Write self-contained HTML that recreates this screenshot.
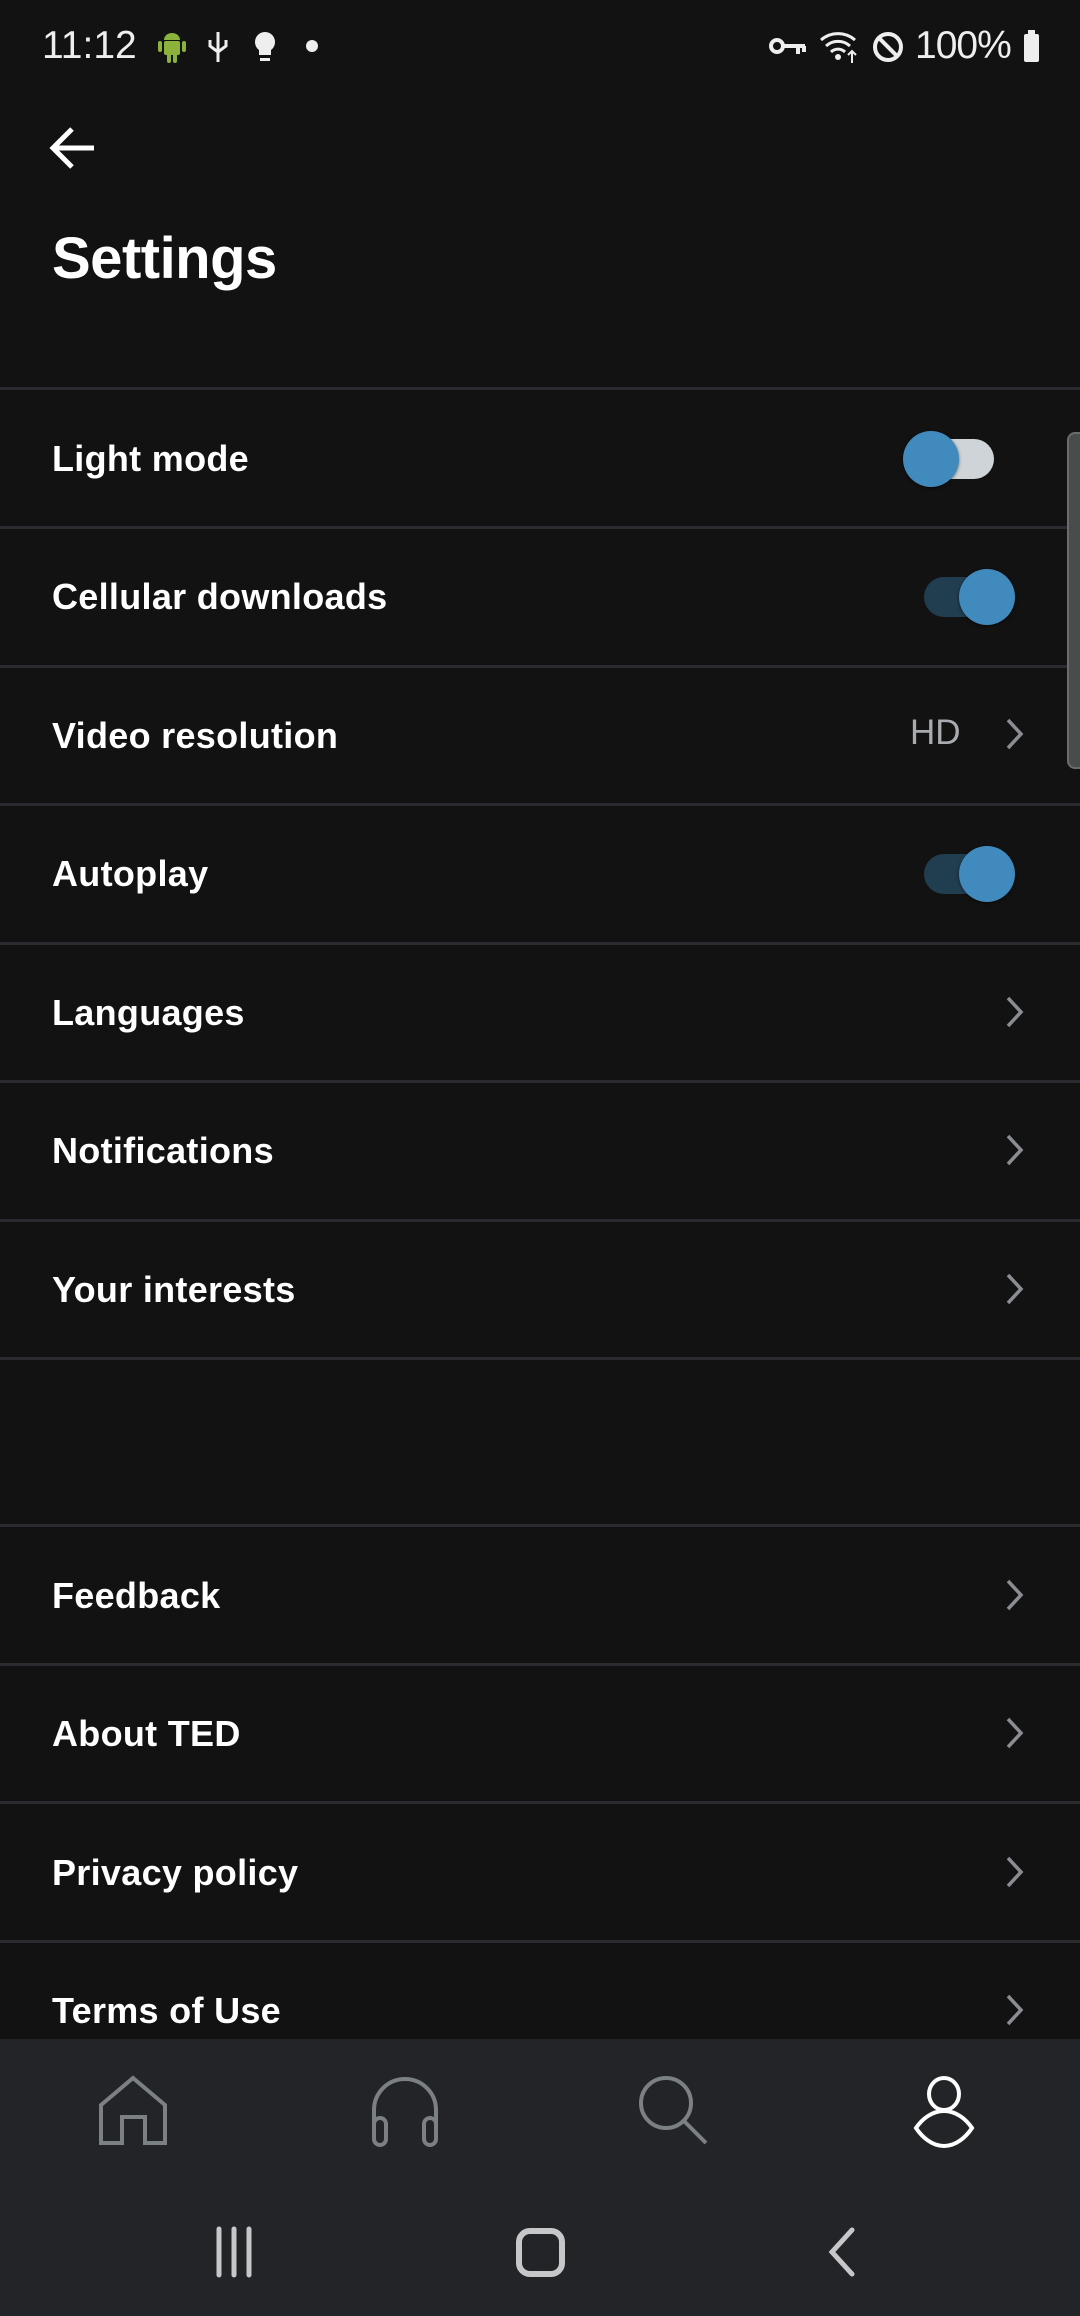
<!DOCTYPE html>
<html><head><meta charset="utf-8"><style>
*{margin:0;padding:0;box-sizing:border-box}
body{width:1080px;height:2316px;background:#121212;position:relative;overflow:hidden;font-family:"Liberation Sans",sans-serif;color:#fff}
.abs{position:absolute}
.sep{position:absolute;left:0;width:1080px;height:3px;background:#2a2b30}
.lbl{position:absolute;left:52px;font-size:36px;font-weight:bold;letter-spacing:0.3px;line-height:40px}
.chev{position:absolute;left:1003px}
</style></head><body>
<div class="abs" style="left:42px;top:24px;font-size:39px;color:#eee;line-height:44px">11:12</div>
<svg class="abs" style="left:156px;top:30px" width="32" height="34" viewBox="0 0 32 34"><g fill="#8bb23a"><path d="M8 10a8 7 0 0 1 16 0z"/><rect x="8" y="11" width="16" height="14" rx="2"/><rect x="2" y="11" width="4" height="11" rx="2"/><rect x="26" y="11" width="4" height="11" rx="2"/><rect x="11" y="23" width="4" height="10" rx="2"/><rect x="17" y="23" width="4" height="10" rx="2"/></g></svg>
<svg class="abs" style="left:205px;top:30px" width="26" height="34" viewBox="0 0 26 34"><g stroke="#eee" stroke-width="3" fill="none"><path d="M13 2v30M5 10v6l8 6 8-6v-6"/></g></svg>
<svg class="abs" style="left:252px;top:30px" width="26" height="34" viewBox="0 0 26 34"><path d="M13 2a10 10 0 0 1 6 18v5h-12v-5a10 10 0 0 1 6-18z M8 28h10v3h-10z" fill="#eee"/></svg>
<div class="abs" style="left:306px;top:40px;width:12px;height:12px;border-radius:6px;background:#eee"></div>
<svg class="abs" style="left:768px;top:34px" width="40" height="26" viewBox="0 0 40 26"><circle cx="9" cy="12" r="6" stroke="#eee" stroke-width="4" fill="none"/><path d="M15 12h22M30 12v8M36 12v6" stroke="#eee" stroke-width="4"/></svg>
<svg class="abs" style="left:818px;top:30px" width="44" height="34" viewBox="0 0 44 34"><g stroke="#eee" stroke-width="3" fill="none"><path d="M3 10a26 26 0 0 1 34 0M8 16a18 18 0 0 1 24 0M13 22a10 10 0 0 1 14 0"/></g><circle cx="20" cy="27" r="3" fill="#eee"/><path d="M34 33v-12M30 25l4-4 4 4" stroke="#eee" stroke-width="2" fill="none"/></svg>
<svg class="abs" style="left:870px;top:30px" width="36" height="34" viewBox="0 0 36 34"><circle cx="18" cy="17" r="13" stroke="#eee" stroke-width="4" fill="none"/><path d="M9 8l18 18" stroke="#eee" stroke-width="4"/></svg>
<div class="abs" style="left:915px;top:24px;font-size:39px;color:#eee;line-height:44px;letter-spacing:-1px">100%</div>
<div class="abs" style="left:1024px;top:34px;width:15px;height:28px;border-radius:2px;background:#eee"></div>
<div class="abs" style="left:1028px;top:30px;width:7px;height:5px;background:#eee"></div>
<svg class="abs" style="left:48px;top:124px" width="50" height="48" viewBox="0 0 50 48"><path d="M46 24H6M24 5L5 24l19 19" stroke="#fff" stroke-width="5" fill="none"/></svg>
<div class="abs" style="left:52px;top:226px;font-size:58px;font-weight:bold;line-height:66px;letter-spacing:-0.5px">Settings</div>
<div class="sep" style="top:387px"></div><div class="sep" style="top:526px"></div><div class="sep" style="top:665px"></div><div class="sep" style="top:803px"></div><div class="sep" style="top:942px"></div><div class="sep" style="top:1080px"></div><div class="sep" style="top:1219px"></div><div class="sep" style="top:1357px"></div>
<div class="sep" style="top:1524px"></div><div class="sep" style="top:1663px"></div><div class="sep" style="top:1801px"></div><div class="sep" style="top:1940px"></div>
<div class="lbl" style="top:439px">Light mode</div>
<div class="lbl" style="top:577px">Cellular downloads</div>
<div class="lbl" style="top:716px">Video resolution</div>
<div class="lbl" style="top:854px">Autoplay</div>
<div class="lbl" style="top:993px">Languages</div>
<div class="lbl" style="top:1131px">Notifications</div>
<div class="lbl" style="top:1270px">Your interests</div>
<div class="lbl" style="top:1576px">Feedback</div>
<div class="lbl" style="top:1714px">About TED</div>
<div class="lbl" style="top:1853px">Privacy policy</div>
<div class="lbl" style="top:1991px">Terms of Use</div>
<div class="abs" style="left:930px;top:439px;width:64px;height:40px;border-radius:20px;background:#cfd4d9"></div>
<div class="abs" style="left:903px;top:431px;width:56px;height:56px;border-radius:28px;background:#418abd;box-shadow:0 1px 3px rgba(0,0,0,.5)"></div>
<div class="abs" style="left:924px;top:577px;width:70px;height:40px;border-radius:20px;background:#213d50"></div>
<div class="abs" style="left:959px;top:569px;width:56px;height:56px;border-radius:28px;background:#418abd;box-shadow:0 1px 3px rgba(0,0,0,.5)"></div>
<div class="abs" style="left:924px;top:854px;width:70px;height:40px;border-radius:20px;background:#213d50"></div>
<div class="abs" style="left:959px;top:846px;width:56px;height:56px;border-radius:28px;background:#418abd;box-shadow:0 1px 3px rgba(0,0,0,.5)"></div>
<div class="abs" style="left:910px;top:713px;font-size:35px;color:#a8abaf;line-height:40px">HD</div>
<svg class="chev" style="top:716px" width="24" height="36" viewBox="0 0 24 36"><path d="M5 4l13 14L5 32" stroke="#8a8d91" stroke-width="3.5" fill="none"/></svg>
<svg class="chev" style="top:994px" width="24" height="36" viewBox="0 0 24 36"><path d="M5 4l13 14L5 32" stroke="#8a8d91" stroke-width="3.5" fill="none"/></svg>
<svg class="chev" style="top:1132px" width="24" height="36" viewBox="0 0 24 36"><path d="M5 4l13 14L5 32" stroke="#8a8d91" stroke-width="3.5" fill="none"/></svg>
<svg class="chev" style="top:1271px" width="24" height="36" viewBox="0 0 24 36"><path d="M5 4l13 14L5 32" stroke="#8a8d91" stroke-width="3.5" fill="none"/></svg>
<svg class="chev" style="top:1577px" width="24" height="36" viewBox="0 0 24 36"><path d="M5 4l13 14L5 32" stroke="#8a8d91" stroke-width="3.5" fill="none"/></svg>
<svg class="chev" style="top:1715px" width="24" height="36" viewBox="0 0 24 36"><path d="M5 4l13 14L5 32" stroke="#8a8d91" stroke-width="3.5" fill="none"/></svg>
<svg class="chev" style="top:1854px" width="24" height="36" viewBox="0 0 24 36"><path d="M5 4l13 14L5 32" stroke="#8a8d91" stroke-width="3.5" fill="none"/></svg>
<svg class="chev" style="top:1992px" width="24" height="36" viewBox="0 0 24 36"><path d="M5 4l13 14L5 32" stroke="#8a8d91" stroke-width="3.5" fill="none"/></svg>
<div class="abs" style="left:1067px;top:432px;width:20px;height:337px;border-radius:8px;background:#4a4b4d;border:2px solid #6a6b6d"></div>
<div class="abs" style="left:0;top:2039px;width:1080px;height:277px;background:#232428"></div>
<svg class="abs" style="left:98px;top:2075px" width="72" height="72" viewBox="0 0 72 72"><path d="M3 68V30L35 3l32 27v38H47V42H24v26z" stroke="#7b8085" stroke-width="4" fill="none"/></svg>
<svg class="abs" style="left:370px;top:2076px" width="70" height="72" viewBox="0 0 70 72"><path d="M4 50V34a31 31 0 0 1 62 0v16" stroke="#7b8085" stroke-width="4" fill="none"/><rect x="4" y="42" width="12" height="27" rx="6" stroke="#7b8085" stroke-width="4" fill="none"/><rect x="54" y="42" width="12" height="27" rx="6" stroke="#7b8085" stroke-width="4" fill="none"/></svg>
<svg class="abs" style="left:638px;top:2075px" width="72" height="72" viewBox="0 0 72 72"><circle cx="28" cy="28" r="25" stroke="#7b8085" stroke-width="4" fill="none"/><path d="M46 46l22 22" stroke="#7b8085" stroke-width="4"/></svg>
<svg class="abs" style="left:912px;top:2075px" width="64" height="74" viewBox="0 0 64 74"><ellipse cx="32" cy="19" rx="15" ry="16" stroke="#fff" stroke-width="4" fill="none"/><path d="M32 36C20 36 10 44 4 53c6 9 16 18 28 18s22-9 28-18c-6-9-16-17-28-17z" stroke="#fff" stroke-width="4" fill="none"/></svg>
<svg class="abs" style="left:212px;top:2226px" width="52" height="52" viewBox="0 0 52 52"><path d="M7 3v46M22 3v46M37 3v46" stroke="#c7c7c9" stroke-width="5" stroke-linecap="round"/></svg>
<div class="abs" style="left:516px;top:2228px;width:49px;height:49px;border:6px solid #c7c7c9;border-radius:14px"></div>
<svg class="abs" style="left:824px;top:2226px" width="36" height="52" viewBox="0 0 36 52"><path d="M28 4L8 26l20 22" stroke="#c7c7c9" stroke-width="5" fill="none" stroke-linecap="round"/></svg>
</body></html>
